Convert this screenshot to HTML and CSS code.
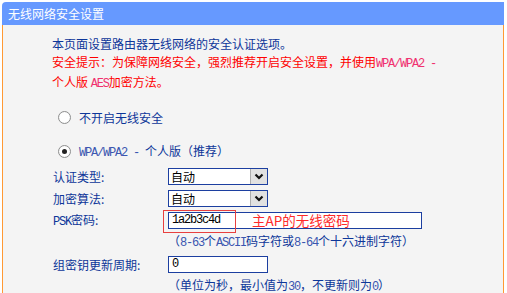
FILE: index.html
```html
<!DOCTYPE html>
<html lang="zh-CN">
<head>
    <meta charset="UTF-8">
    <meta name="viewport" content="width=device-width, initial-scale=1.0">
    <title>无线网络安全设置</title>
    <link rel="stylesheet" href="styles.css">
</head>
<body>
    <div class="panel">
        <div class="panel-title">无线网络安全设置</div>
        <div class="panel-body">
            <p class="intro">
                本页面设置路由器无线网络的安全认证选项。<br>
                <span class="warn">安全提示：为保障网络安全，强烈推荐开启安全设置，并使用<span class="en">WPA/WPA2 -</span><br>个人版 <span class="en">AES</span>加密方法。</span>
            </p>

            <label class="radio-row first">
                <input type="radio" name="security" value="none">
                <span>不开启无线安全</span>
            </label>
            <label class="radio-row second">
                <input type="radio" name="security" value="psk" checked>
                <span><span class="en">WPA/WPA2 - </span>个人版（推荐）</span>
            </label>

            <div class="form-grid">
                <label for="auth-type">认证类型:</label>
                <div class="cell">
                    <span class="select-box">
                        <select id="auth-type">
                            <option>自动</option>
                            <option>WPA-PSK</option>
                            <option>WPA2-PSK</option>
                        </select>
                        <span class="select-btn"><svg width="10" height="7" viewBox="0 0 10 7"><path d="M1.5 1.5 L5 5 L8.5 1.5" fill="none" stroke="#111" stroke-width="2.2"/></svg></span>
                    </span>
                </div>

                <label for="cipher">加密算法:</label>
                <div class="cell">
                    <span class="select-box">
                        <select id="cipher">
                            <option>自动</option>
                            <option>TKIP</option>
                            <option>AES</option>
                        </select>
                        <span class="select-btn"><svg width="10" height="7" viewBox="0 0 10 7"><path d="M1.5 1.5 L5 5 L8.5 1.5" fill="none" stroke="#111" stroke-width="2.2"/></svg></span>
                    </span>
                </div>

                <label for="psk"><span class="en">PSK</span>密码:</label>
                <div class="cell psk-cell">
                    <input type="text" id="psk" class="text-input wide" value="1a2b3c4d">
                    <span class="mark-box"></span>
                    <span class="mark-note">主AP的无线密码</span>
                </div>

                <span></span>
                <div class="hint">（<span class="en">8-63</span>个<span class="en">ASCII</span>码字符或<span class="en">8-64</span>个十六进制字符）</div>

                <label for="group-key">组密钥更新周期:</label>
                <div class="cell">
                    <input type="text" id="group-key" class="text-input" value="0">
                </div>

                <span></span>
                <div class="hint">（单位为秒，最小值为<span class="en">30</span>，不更新则为<span class="en">0</span>）</div>
            </div>
        </div>
    </div>
</body>
</html>
```

FILE: styles.css
```css
body {
    margin: 0;
    background: #fff;
    font-family: "Noto Sans CJK SC", "DejaVu Sans", sans-serif;
    font-size: 12px;
    color: #0d3699;
}
.panel {
    margin: 2px 0 0 2px;
    width: 502px;
}
.panel-title {
    height: 23px;
    line-height: 23px;
    padding-left: 6px;
    background: #6699ff;
    color: #fff;
    border-top-left-radius: 4px;
}
.panel-body {
    height: 270px;
    padding: 10px 0 0 50px;
    box-sizing: border-box;
    background: #f4f4f4;
    border-left: 1px solid #ff9933;
    border-right: 1px solid #ff9933;
    overflow: hidden;
}
.intro {
    margin: 0 0 0 -1px;
    line-height: 18px;
}
.warn {
    color: #ff0000;
}
.warn .en {
    color: #f0306e;
}
.en {
    font-family: "Liberation Mono", "DejaVu Sans Mono", monospace;
    font-size: 12px;
    letter-spacing: -1.2px;
    white-space: pre;
}
.radio-row {
    display: flex;
    align-items: center;
    height: 22px;
    gap: 8px;
    padding-left: 5px;
}
.radio-row.first {
    margin-top: 13px;
}
.radio-row.second {
    margin-top: 12px;
}
.radio-row .en {
    color: #3a56b0;
}
.radio-row input {
    appearance: none;
    margin: 0;
    width: 13px;
    height: 13px;
    border: 1px solid #8e8f8f;
    border-radius: 50%;
    background: radial-gradient(circle, #fff 55%, #e8e8e8 100%);
    box-sizing: border-box;
    position: relative;
}
.radio-row input:checked::after {
    content: "";
    position: absolute;
    left: 3px;
    top: 3px;
    width: 5px;
    height: 5px;
    border-radius: 50%;
    background: #222;
}
.form-grid {
    margin-top: 3px;
    display: grid;
    grid-template-columns: 115px 1fr;
    grid-auto-rows: 22px;
    align-items: center;
}
.cell {
    display: flex;
    align-items: center;
}
.hint {
    line-height: 22px;
}
.select-box {
    display: flex;
    width: 100px;
    height: 17px;
    border: 1px solid #1c3fa0;
    box-sizing: border-box;
    background: #fff;
}
.select-box select {
    appearance: none;
    flex: 1;
    min-width: 0;
    border: 0;
    margin: 0;
    padding: 0 0 0 2px;
    background: #fff;
    font-family: inherit;
    font-size: 12px;
    color: #000;
    height: 15px;
    line-height: 15px;
    outline: none;
}
.select-btn {
    width: 16px;
    height: 15px;
    background: #e1e1e1;
    border-left: 1px solid #adadad;
    display: flex;
    align-items: center;
    justify-content: center;
}
.text-input {
    width: 100px;
    height: 17px;
    box-sizing: border-box;
    border: 1px solid #1c3fa0;
    background: #fff;
    margin: 0;
    padding: 0 0 0 3px;
    font-family: "Liberation Mono", "DejaVu Sans Mono", monospace;
    font-size: 12px;
    letter-spacing: -1.2px;
    color: #000;
    outline: none;
}
.text-input.wide {
    width: 254px;
}
.psk-cell {
    position: relative;
}
.mark-box {
    position: absolute;
    left: -5px;
    top: -2px;
    width: 73px;
    height: 23px;
    border: 1px solid #e8403f;
    box-sizing: border-box;
}
.mark-note {
    position: absolute;
    left: 84px;
    top: -1px;
    color: #ff2a2a;
    font-size: 13.5px;
    line-height: 18px;
}
.hint .en {
    color: #3a56b0;
}
```
